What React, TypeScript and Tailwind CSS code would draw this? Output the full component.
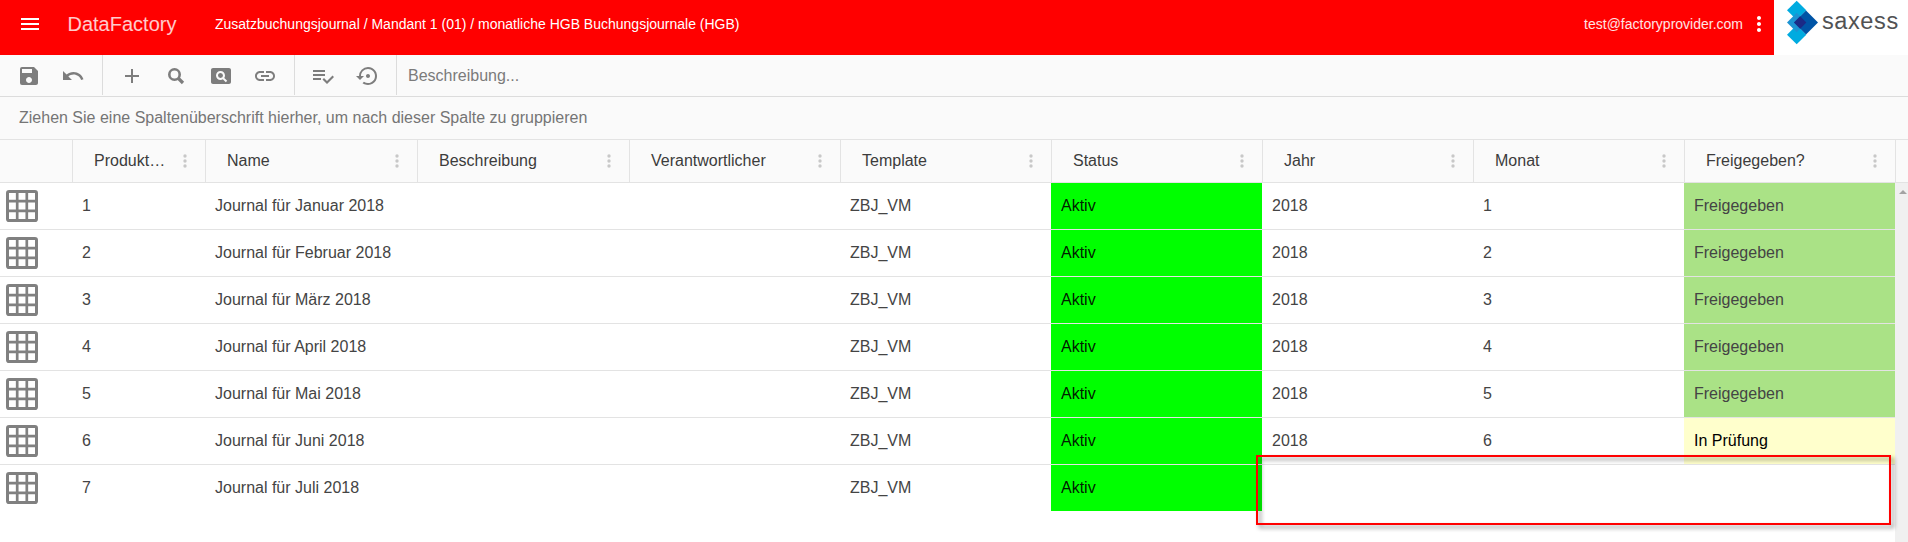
import React from "react";
import { MdAdd, MdLink, MdMenu, MdMoreVert, MdPageview, MdSave, MdSettingsBackupRestore, MdUndo } from "react-icons/md";

const columns = ["Produkt…", "Name", "Beschreibung", "Verantwortlicher", "Template", "Status", "Jahr", "Monat", "Freigegeben?"];

const rows = ["Januar", "Februar", "März", "April", "Mai", "Juni", "Juli"].map((month, i) => ({
  id: i + 1,
  name: `Journal für ${month} 2018`,
  year: i < 6 ? "2018" : "",
  month: i < 6 ? String(i + 1) : "",
  release: i < 5 ? "Freigegeben" : i === 5 ? "In Prüfung" : "",
}));

function IconButton({ children }: { children: React.ReactNode }) {
  return <button className="flex h-full items-center justify-center text-[#7d7d7d]">{children}</button>;
}

function TopBar() {
  return (
    <header className="flex h-[55px] bg-[#ff0000] text-white">
      <div className="flex h-12 flex-1 items-center">
        <MdMenu size={24} className="ml-[18px]" />
        <span className="ml-[25.5px] w-[147.5px] text-[20px] text-white/80">DataFactory</span>
        <span className="text-[14px]">Zusatzbuchungsjournal / Mandant 1 (01) / monatliche HGB Buchungsjournale (HGB)</span>
        <span className="ml-auto text-[14px] text-white/90">test@factoryprovider.com</span>
        <MdMoreVert size={24} className="mr-[3px] ml-1" />
      </div>
      <div className="flex w-[134px] items-start bg-white pl-[13px]">
        <svg width="32" height="45" viewBox="0 0 32 45" className="shrink-0">
          <path d="M9.7.7 19.3 10.3 9.7 20 0 10.3z" fill="#00abe0" />
          <path d="M9.7 25 19.3 34.7 9.7 44.3 0 34.7z" fill="#00abe0" />
          <path d="M9.7 12.8 19.3 22.5 9.7 32.2 0 22.5z" fill="#1c93d2" />
          <path d="M19 10.5 31 22.5 19 34.5 7 22.5z" fill="#0054a6" />
          <path d="M13.2 16.3 19.3 22.5 13.2 28.7 7 22.5z" fill="#1b2a86" />
        </svg>
        <span className="ml-[3px] pt-[9px] text-[23.5px] tracking-[0.6px] text-[#515254]">saxess</span>
      </div>
    </header>
  );
}

function Toolbar() {
  return (
    <div className="flex h-[42px] items-start border-b border-[#dcdcdc] bg-[#fafafa]">
      <div className="flex h-10 w-[103px] items-center gap-5 border-r border-[#dcdcdc] pt-0.5 pl-[17px]">
        <IconButton><MdSave size={24} /></IconButton>
        <IconButton><MdUndo size={24} /></IconButton>
      </div>
      <div className="flex h-10 w-48 items-center gap-5 border-r border-[#dcdcdc] pt-0.5 pl-[17px]">
        <IconButton><MdAdd size={24} /></IconButton>
        <IconButton>
          <svg width="25" height="24" viewBox="0 0 25 24" fill="none" stroke="currentColor">
            <circle cx="10.5" cy="10.5" r="5.2" strokeWidth="2.6" />
            <path d="M14 14l5 5" strokeWidth="3.2" />
          </svg>
        </IconButton>
        <IconButton><MdPageview size={24} /></IconButton>
        <IconButton><MdLink size={24} /></IconButton>
      </div>
      <div className="flex h-10 w-[102px] items-center gap-[21px] border-r border-[#dcdcdc] pt-0.5 pl-4">
        <IconButton>
          <svg width="24" height="24" viewBox="0 0 24 24" fill="currentColor">
            <path d="M14 10H2v2h12v-2zm0-4H2v2h12V6zM2 16h8v-2H2v2zm19.5-4.5L23 13l-6.99 7-4.51-4.5L13 14l3.01 3 5.49-5.5z" />
          </svg>
        </IconButton>
        <IconButton><MdSettingsBackupRestore size={24} /></IconButton>
      </div>
      <span className="pt-[9px] pl-[11px] text-[16px] text-[#7b7b7b]">Beschreibung...</span>
    </div>
  );
}

function HeaderDots() {
  return (
    <svg width="4" height="14" viewBox="0 0 4 14" fill="#c8c8c8">
      <circle cx="2" cy="2" r="1.7" />
      <circle cx="2" cy="7" r="1.7" />
      <circle cx="2" cy="12" r="1.7" />
    </svg>
  );
}

function GridIcon() {
  return (
    <svg width="32" height="32" viewBox="0 0 32 32" fill="none" stroke="currentColor">
      <rect x="1.5" y="1.5" width="29" height="29" rx="1.6" strokeWidth="3" />
      <path d="M11.2 2v28M20.8 2v28M2 11.2h28M2 20.8h28" strokeWidth="2.7" />
    </svg>
  );
}

export default function App() {
  return (
    <div className="relative flex h-[542px] w-[1908px] flex-col overflow-hidden bg-white font-['Liberation_Sans',Arial,sans-serif] leading-6">
      <TopBar />
      <Toolbar />
      <div className="flex h-[43px] items-center border-b border-[#e3e3e3] bg-[#fafafa] pl-[19px] text-[16px] text-[#757575]">
        Ziehen Sie eine Spaltenüberschrift hierher, um nach dieser Spalte zu gruppieren
      </div>
      <div className="grid h-[43px] grid-cols-[72px_133px_212px_212px_211px_211px_211px_211px_211px_211px_13px] border-b border-[#e3e3e3] bg-[#fafafa] text-[16px] text-[#3c3c3c]">
        <div />
        {columns.map((c) => (
          <div key={c} className="flex items-center justify-between border-l border-[#e3e3e3] pr-[18px] pl-[21px]">
            <span>{c}</span>
            <HeaderDots />
          </div>
        ))}
        <div className="border-l border-[#e3e3e3]" />
      </div>
      <div className="flex flex-1">
        <div className="w-[1895px] text-[16px] text-[#444444]">
          {rows.map((r) => (
            <div
              key={r.id}
              className="grid h-[47px] grid-cols-[72px_133px_212px_212px_211px_211px_211px_211px_211px_211px] border-b border-[#e3e3e3] last:h-[46px] last:border-b-0 [&>div]:flex [&>div]:items-center [&>div]:pl-[10px]"
            >
              <div className="!pl-[6px] text-[#808080]"><GridIcon /></div>
              <div>{r.id}</div>
              <div>{r.name}</div>
              <div />
              <div />
              <div>ZBJ_VM</div>
              <div className="bg-[#00ff00] text-black/90">Aktiv</div>
              <div>{r.year}</div>
              <div>{r.month}</div>
              <div className={r.release === "Freigegeben" ? "bg-[#aae286]" : r.release ? "bg-[#ffffcc] text-black" : ""}>{r.release}</div>
            </div>
          ))}
        </div>
        <div className="flex flex-1 justify-center bg-[#f0f0f0] pt-[7px] pl-[3px]">
          <svg width="8" height="4" viewBox="0 0 8 4" fill="#a3a3a3"><path d="M0 4 4 0 8 4z" /></svg>
        </div>
      </div>
      <div className="absolute top-[455px] left-[1256px] h-[70px] w-[635px] border-2 border-[#ff0000] drop-shadow-[3px_3px_2px_rgba(0,0,0,0.45)]" />
    </div>
  );
}
